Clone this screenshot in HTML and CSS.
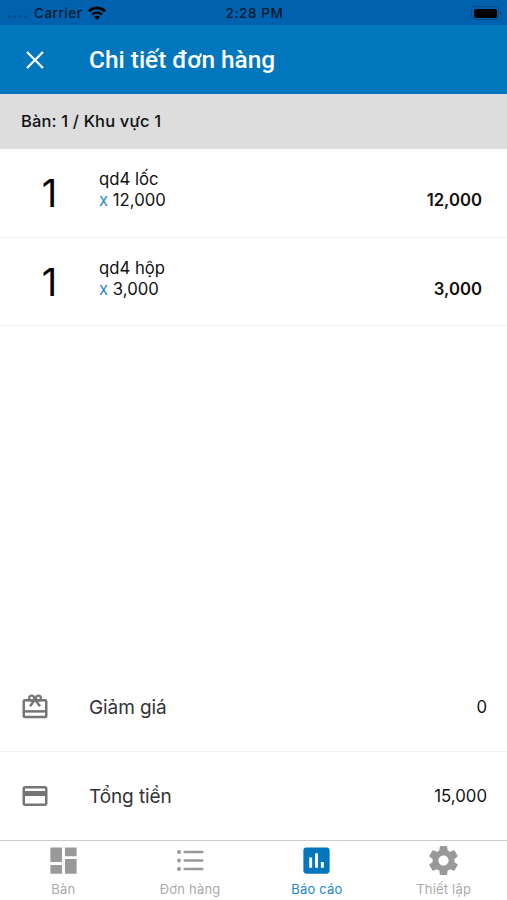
FILE: index.html
```html
<!DOCTYPE html>
<html lang="vi">
<head>
  <meta charset="UTF-8">
  <meta name="viewport" content="width=device-width, initial-scale=1.0">
  <title>Chi tiết đơn hàng</title>
  <link rel="stylesheet" href="styles.css">
</head>
<body>
  <div class="app">
    <div class="status-bar">
      <div class="carrier">
        <span class="signal"><i></i><i></i><i></i><i></i></span>
        <span class="carrier-name">Carrier</span>
        <svg width="18" height="14" viewBox="0 0 18 14" fill="none" stroke="currentColor" stroke-width="2.7">
          <path d="M1 5.2a11.3 11.3 0 0 1 16 0"></path>
          <path d="M4 8.6a7 7 0 0 1 10 0"></path>
          <path d="M9 13.8L6 10.9a4.200 4.200 0 0 1 6 0z" fill="currentColor" stroke="none"></path>
        </svg>
      </div>
      <div class="time">2:28 PM</div>
      <div class="battery"><span class="battery-level"></span></div>
    </div>

    <header class="header">
      <button class="close-btn">
        <svg width="18" height="18" viewBox="0 0 18 18" fill="none" stroke="currentColor" stroke-width="2.2">
          <path d="M1 1l16 16M17 1L1 17"></path>
        </svg>
      </button>
      <h1 class="title">Chi tiết đơn hàng</h1>
    </header>

    <div class="table-name">Bàn: 1 / Khu vực 1</div>

    <main class="items">
      <div class="item">
        <div class="item-qty">1</div>
        <div class="item-info">
          <div>qd4 lốc</div>
          <div><span class="times">x</span> 12,000</div>
        </div>
        <div class="item-total">12,000</div>
      </div>
      <div class="item">
        <div class="item-qty">1</div>
        <div class="item-info">
          <div>qd4 hộp</div>
          <div><span class="times">x</span> 3,000</div>
        </div>
        <div class="item-total">3,000</div>
      </div>
    </main>

    <div class="summary">
      <div class="summary-row">
        <svg class="summary-icon" viewBox="0 0 24 24" fill="none" stroke="currentColor" stroke-width="2">
          <rect x="3" y="6.500" width="18" height="13.500" rx="1"></rect>
          <path d="M3 15.500h18"></path>
          <circle cx="9.300" cy="4.900" r="2" stroke-width="1.800"></circle>
          <circle cx="14.700" cy="4.900" r="2" stroke-width="1.800"></circle>
          <path d="M12 6l-4 5.500M12 6l4 5.500"></path>
        </svg>
        <span class="summary-label">Giảm giá</span>
        <span class="summary-value">0</span>
      </div>
      <div class="summary-row">
        <svg class="summary-icon" viewBox="0 0 24 24" fill="currentColor">
          <path d="M20 4H4c-1.110 0-1.990.89-1.990 2L2 18c0 1.110.89 2 2 2h16c1.110 0 2-.89 2-2V6c0-1.110-.89-2-2-2zm0 14H4v-6h16v6zm0-10H4V6h16v2z"></path>
        </svg>
        <span class="summary-label">Tổng tiền</span>
        <span class="summary-value">15,000</span>
      </div>
    </div>

    <nav class="tabs">
      <a class="tab">
        <svg class="tab-icon" viewBox="0 0 24 24" fill="currentColor">
          <path d="M3 13h8V3H3v10zm0 8h8v-6H3v6zm10 0h8V11h-8v10zm0-18v6h8V3h-8z"></path>
        </svg>
        <span>Bàn</span>
      </a>
      <a class="tab">
        <svg class="tab-icon" viewBox="0 0 35 35" fill="currentColor">
          <circle cx="6" cy="9" r="2"></circle>
          <circle cx="6" cy="17.500" r="2"></circle>
          <circle cx="6" cy="26" r="2"></circle>
          <rect x="10.500" y="7.800" width="20" height="2.500" rx="1"></rect>
          <rect x="10.500" y="16.300" width="20" height="2.500" rx="1"></rect>
          <rect x="10.500" y="24.800" width="20" height="2.500" rx="1"></rect>
        </svg>
        <span>Đơn hàng</span>
      </a>
      <a class="tab active">
        <svg class="tab-icon" viewBox="0 0 24 24" fill="currentColor">
          <path d="M19 3H5c-1.100 0-2 .9-2 2v14c0 1.100.9 2 2 2h14c1.100 0 2-.9 2-2V5c0-1.100-.9-2-2-2zM9 17H7v-7h2v7zm4 0h-2V7h2v10zm4 0h-2v-4h2v4z"></path>
        </svg>
        <span>Báo cáo</span>
      </a>
      <a class="tab">
        <svg class="tab-icon" viewBox="0 0 24 24" fill="currentColor">
          <path d="M19.430 12.980c.04-.32.07-.64.07-.98s-.03-.66-.07-.98l2.110-1.650c.19-.15.24-.42.12-.64l-2-3.460c-.12-.22-.39-.3-.61-.22l-2.490 1c-.52-.4-1.080-.73-1.690-.98l-.38-2.650C14.460 2.180 14.250 2 14 2h-4c-.25 0-.46.18-.49.42l-.38 2.650c-.61.25-1.170.59-1.690.98l-2.490-1c-.23-.09-.49 0-.61.22l-2 3.460c-.13.22-.07.49.12.64l2.110 1.650c-.04.32-.07.65-.07.98s.03.66.07.98l-2.110 1.650c-.19.15-.24.42-.12.64l2 3.460c.12.22.39.3.61.22l2.490-1c.52.4 1.080.73 1.690.98l.38 2.650c.03.24.24.42.49.42h4c.25 0 .46-.18.49-.42l.38-2.650c.61-.25 1.170-.59 1.690-.98l2.490 1c.23.09.49 0 .61-.22l2-3.460c.12-.22.07-.49-.12-.64l-2.110-1.650zM12 15.500c-1.930 0-3.500-1.570-3.500-3.500s1.570-3.500 3.500-3.500 3.500 1.570 3.500 3.500-1.570 3.500-3.500 3.500z"></path>
        </svg>
        <span>Thiết lập</span>
      </a>
    </nav>
  </div>
</body>
</html>
```
FILE: styles.css
```css
:root {
  --primary: #0277BD;
  --primary-dark: #0062AF;
  --dark: #111;
  --gray: #757575;
  --line: #f2f2f2;
}

* {
  margin: 0;
  padding: 0;
  box-sizing: border-box;
}

body {
  font-family: Inter, 'Noto Sans', sans-serif;
  background-color: white;
  color: var(--dark);
}

.app {
  display: flex;
  flex-direction: column;
  height: 100vh;
  overflow: hidden;
}

.status-bar {
  display: grid;
  grid-template-columns: 1fr auto 1fr;
  align-items: center;
  height: 25px;
  padding: 1px 6px 0 8px;
  background-color: var(--primary-dark);
  color: #06182b;
  font-size: 13.5px;
  font-weight: 500;
}

.carrier {
  display: flex;
  align-items: center;
}

.carrier-name {
  letter-spacing: 0.5px;
}

.carrier svg {
  margin-left: 6px;
  color: black;
}

.signal {
  display: flex;
  gap: 3px;
  width: 26px;
  padding-top: 7px;
}

.signal i {
  width: 2.5px;
  height: 2.5px;
  border-radius: 50%;
  background-color: #064b88;
}

.time {
  letter-spacing: 0.6px;
}

.battery {
  justify-self: end;
  position: relative;
  width: 28px;
  height: 14px;
  margin-right: 2px;
  padding: 1.5px;
  border: 1px solid #084b83;
  border-radius: 4px;
}

.battery::after {
  content: '';
  position: absolute;
  top: 4px;
  right: -3px;
  width: 1px;
  height: 3px;
  background-color: #084b83;
}

.battery-level {
  display: block;
  height: 100%;
  border-radius: 2px;
  background-color: black;
}

.header {
  display: flex;
  align-items: center;
  height: 69px;
  background-color: var(--primary);
  color: white;
}

.close-btn {
  display: flex;
  width: 89px;
  padding-left: 26px;
  border: none;
  background: none;
  color: white;
}

.title {
  font-family: Roboto, sans-serif;
  font-size: 24.4px;
  font-weight: 500;
}

.table-name {
  height: 55px;
  padding-left: 21px;
  background-color: #ddd;
  font-size: 16.5px;
  font-weight: 500;
  letter-spacing: 0.15px;
  line-height: 55px;
}

.items {
  flex: 1;
}

.item {
  display: flex;
  height: 88.5px;
  padding: 20px 25px 0 0;
  border-bottom: 1px solid var(--line);
  font-size: 16.7px;
  line-height: 21px;
}

.item-qty {
  width: 99px;
  padding-top: 3px;
  text-align: center;
  font-size: 38px;
  line-height: 42px;
  color: black;
}

.item-info {
  flex: 1;
}

.times {
  color: #2a8bca;
}

.item-total {
  padding-top: 21px;
  font-weight: 600;
}

.summary-row {
  display: flex;
  align-items: center;
  height: 88.5px;
  padding: 0 20px;
  border-bottom: 1px solid var(--line);
}

.summary-row:last-child {
  border-bottom: none;
}

.summary-icon {
  width: 30px;
  height: 30px;
  margin-right: 39px;
  color: var(--gray);
}

.summary-label {
  flex: 1;
  padding-top: 2px;
  font-size: 19px;
  letter-spacing: -0.1px;
  color: #333;
}

.summary-value {
  font-size: 16.8px;
}

.tabs {
  display: flex;
  height: 60px;
  border-top: 1px solid #ccc;
}

.tab {
  flex: 1;
  display: flex;
  flex-direction: column;
  align-items: center;
  padding-top: 2px;
  font-size: 13px;
  letter-spacing: 0.2px;
  line-height: 17px;
  color: #aaa;
}

.tab-icon {
  width: 35px;
  height: 35px;
  margin-bottom: 3px;
  color: #999;
}

.tab.active {
  color: #2186c8;
}

.tab.active .tab-icon {
  color: var(--primary);
}
```
